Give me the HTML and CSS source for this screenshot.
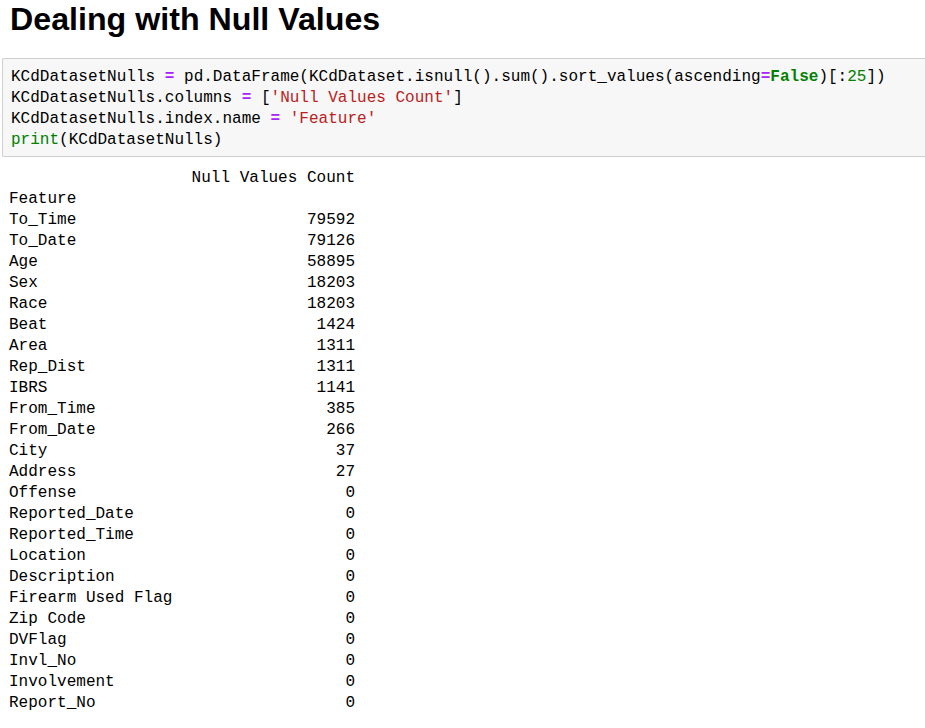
FILE: index.html
```html
<!DOCTYPE html>
<html>
<head>
<meta charset="utf-8">
<link rel="stylesheet" href="styles.css">
</head>
<body>
<div class="page">
  <h1 class="title">Dealing with Null Values</h1>
  <div class="cell">
<pre class="code"><span>KCdDatasetNulls </span><span class="op">=</span><span> pd.DataFrame(KCdDataset.isnull().sum().sort_values(ascending</span><span class="op">=</span><span class="kw">False</span><span>)[:</span><span class="num">25</span><span>])</span>
<span>KCdDatasetNulls.columns </span><span class="op">=</span><span> [</span><span class="str">'Null Values Count'</span><span>]</span>
<span>KCdDatasetNulls.index.name </span><span class="op">=</span><span> </span><span class="str">'Feature'</span>
<span class="bi">print</span><span>(KCdDatasetNulls)</span></pre>
  </div>
<pre class="output">                   Null Values Count
Feature
To_Time                        79592
To_Date                        79126
Age                            58895
Sex                            18203
Race                           18203
Beat                            1424
Area                            1311
Rep_Dist                        1311
IBRS                            1141
From_Time                        385
From_Date                        266
City                              37
Address                           27
Offense                            0
Reported_Date                      0
Reported_Time                      0
Location                           0
Description                        0
Firearm Used Flag                  0
Zip Code                           0
DVFlag                             0
Invl_No                            0
Involvement                        0
Report_No                          0</pre>
</div>
</body>
</html>
```

FILE: styles.css
```css
html, body {
  margin: 0;
  padding: 0;
  background: #ffffff;
}

.page {
  display: flex;
  flex-direction: column;
  padding: 0 0 0 2px;
}

.title {
  margin: 0;
  padding: 0 0 0 8px;
  font-family: "Liberation Sans", Arial, sans-serif;
  font-weight: bold;
  font-size: 32.2px;
  line-height: 38px;
  color: #000000;
  height: 58px;
}

.cell {
  background: #f7f7f7;
  border: 1px solid #cfcfcf;
  border-right: none;
  border-radius: 2px 0 0 2px;
  padding: 8px 0 5px 8px;
}

.code, .output {
  margin: 0;
  font-family: "Liberation Mono", "DejaVu Sans Mono", monospace;
  font-size: 16.02px;
  line-height: 21px;
  color: #000000;
  white-space: pre;
}

.code .op {
  color: #aa22ff;
  font-weight: bold;
}

.code .kw {
  color: #008000;
  font-weight: bold;
}

.code .num {
  color: #008000;
}

.code .str {
  color: #ba2121;
}

.code .bi {
  color: #008000;
}

.output {
  padding: 11px 0 0 7px;
}
```
